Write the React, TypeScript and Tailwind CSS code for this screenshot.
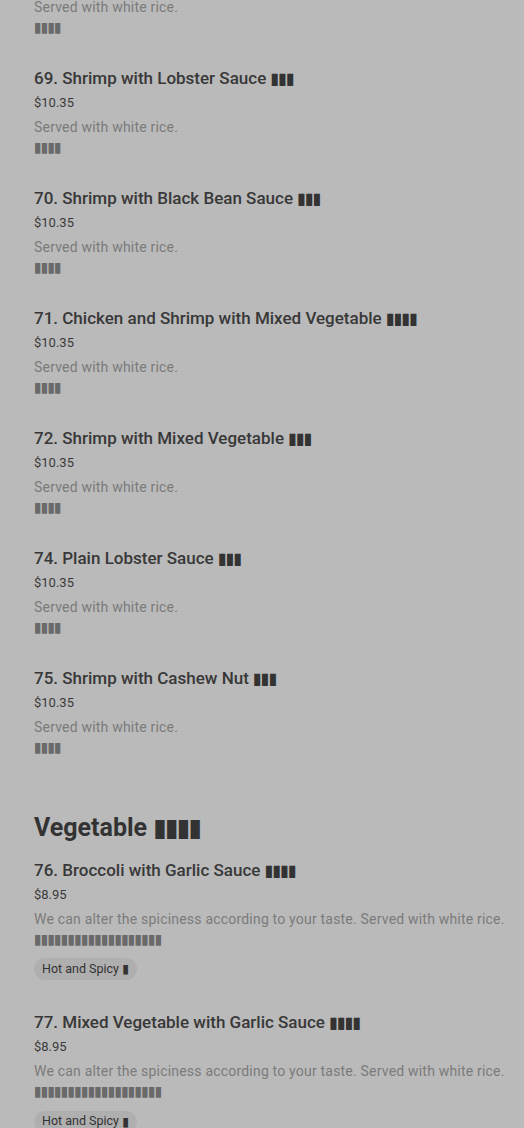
import React from 'react';

type Dish = {
  name: string;
  zh: string;
  price: string;
  desc: string;
  descZh: string;
  tag?: string;
};

const seafood: Dish[] = [
  { name: '69. Shrimp with Lobster Sauce', zh: '▮▮▮', price: '$10.35', desc: 'Served with white rice.', descZh: '▮▮▮▮' },
  { name: '70. Shrimp with Black Bean Sauce', zh: '▮▮▮', price: '$10.35', desc: 'Served with white rice.', descZh: '▮▮▮▮' },
  { name: '71. Chicken and Shrimp with Mixed Vegetable', zh: '▮▮▮▮', price: '$10.35', desc: 'Served with white rice.', descZh: '▮▮▮▮' },
  { name: '72. Shrimp with Mixed Vegetable', zh: '▮▮▮', price: '$10.35', desc: 'Served with white rice.', descZh: '▮▮▮▮' },
  { name: '74. Plain Lobster Sauce', zh: '▮▮▮', price: '$10.35', desc: 'Served with white rice.', descZh: '▮▮▮▮' },
  { name: '75. Shrimp with Cashew Nut', zh: '▮▮▮', price: '$10.35', desc: 'Served with white rice.', descZh: '▮▮▮▮' },
];

const veg: Dish[] = [
  {
    name: '76. Broccoli with Garlic Sauce',
    zh: '▮▮▮▮',
    price: '$8.95',
    desc: 'We can alter the spiciness according to your taste. Served with white rice.',
    descZh: '▮▮▮▮▮▮▮▮▮▮▮▮▮▮▮▮▮▮▮',
    tag: 'Hot and Spicy',
  },
  {
    name: '77. Mixed Vegetable with Garlic Sauce',
    zh: '▮▮▮▮',
    price: '$8.95',
    desc: 'We can alter the spiciness according to your taste. Served with white rice.',
    descZh: '▮▮▮▮▮▮▮▮▮▮▮▮▮▮▮▮▮▮▮',
    tag: 'Hot and Spicy',
  },
];

const tofu = "font-['DejaVu_Sans',sans-serif]";

const DishRow = ({ d }: { d: Dish }) => (
  <div className={d.tag ? 'pb-[30px]' : 'pb-[31px]'}>
    <h3 className="h-6 text-[17px] leading-6 font-medium text-[#383838] whitespace-nowrap">
      {d.name} <span className={`${tofu} text-[16px] leading-[0] tracking-[-1px] text-[#333]`}>{d.zh}</span>
    </h3>
    <div className="mt-[1px] text-[13px] leading-6 text-[#3a3a3a]">{d.price}</div>
    <p className="text-[14px] leading-6 tracking-[0.2px] text-[#7b7b7b] whitespace-nowrap">{d.desc}</p>
    <div className={`${tofu} h-4 text-[14px] leading-4 tracking-[-1px] text-[#6a6a6a] overflow-hidden`}>{d.descZh}</div>
    {d.tag && (
      <div className="mt-[9px]">
        <span className="inline-flex items-center h-[22px] px-2 rounded-full bg-[#afafaf] text-[12.5px] text-[#333]">
          {d.tag}&nbsp;<span className={`${tofu} leading-[0]`}>▮</span>
        </span>
      </div>
    )}
  </div>
);

export default function App() {
  return (
    <div className="min-h-[1128px] bg-[#bababa] pl-[34px] pr-[16px] overflow-hidden font-['Roboto',sans-serif]">
      <div className="-mt-[5px] pb-[31px]">
        <p className="text-[14px] leading-6 tracking-[0.2px] text-[#7b7b7b]">Served with white rice.</p>
        <div className={`${tofu} h-4 text-[14px] leading-4 tracking-[-1px] text-[#6a6a6a] overflow-hidden`}>▮▮▮▮</div>
      </div>
      {seafood.map((d) => (
        <DishRow key={d.name} d={d} />
      ))}
      <h2 className="h-8 mt-[26px] mb-[14px] text-[25px] leading-8 font-bold text-[#333]">
        Vegetable <span className={`${tofu} text-[25px] leading-[0] tracking-[-2px]`}>▮▮▮▮</span>
      </h2>
      {veg.map((d) => (
        <DishRow key={d.name} d={d} />
      ))}
    </div>
  );
}
